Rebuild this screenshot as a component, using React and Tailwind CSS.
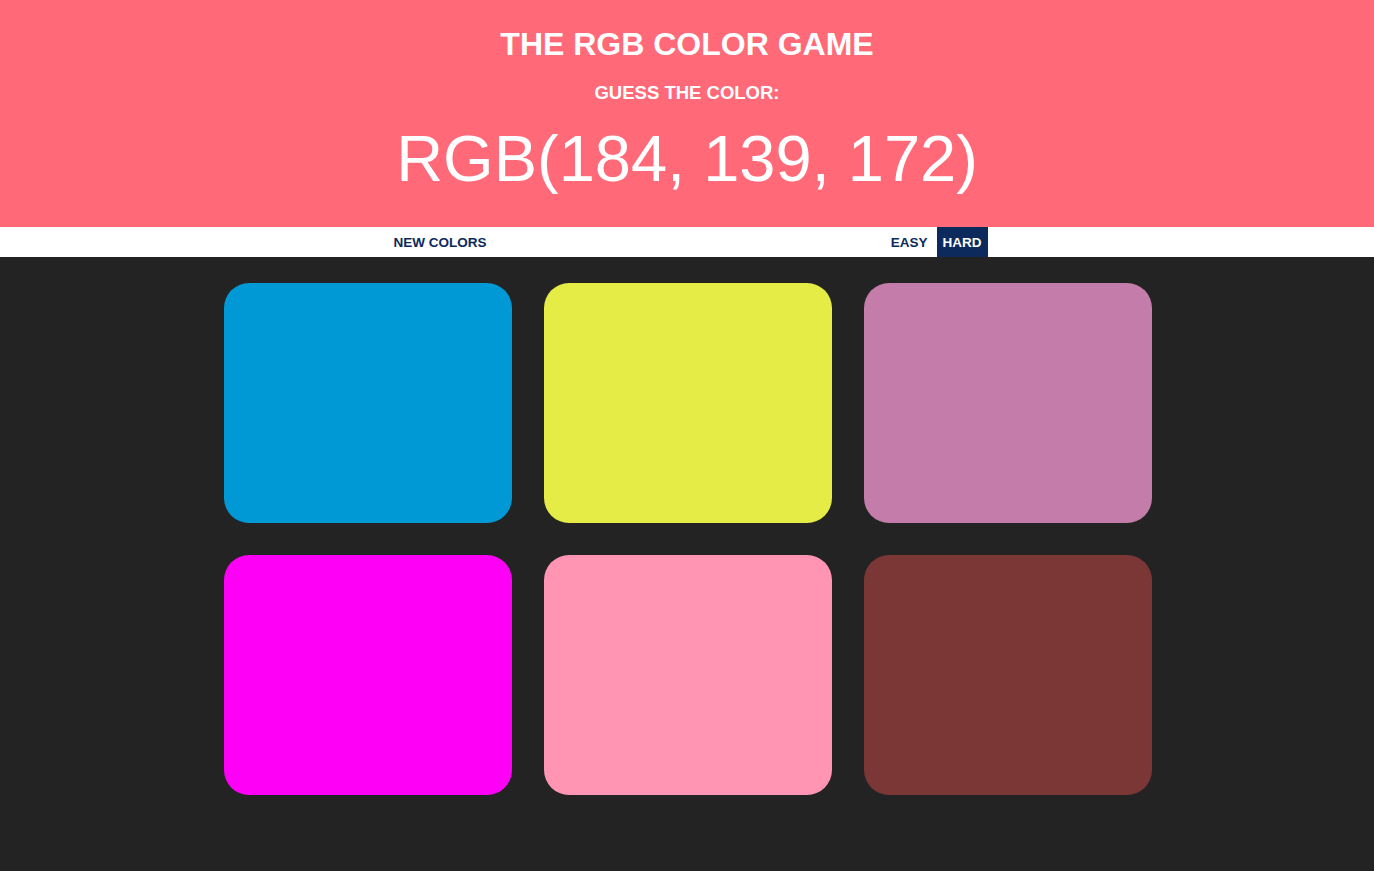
import { useState } from "react";

const colors = [
  "rgb(0, 153, 214)",
  "rgb(229, 236, 69)",
  "rgb(196, 124, 170)",
  "rgb(255, 0, 247)",
  "rgb(255, 148, 179)",
  "rgb(123, 55, 53)",
];

function App() {
  const [mode, setMode] = useState("hard");

  return (
    <div className="min-h-screen bg-[#232323] font-['Liberation_Sans',Arial,sans-serif]">
      {/* Header */}
      <div className="bg-[#ff6978] text-white text-center h-[227px] pt-[26px]">
        <h1 className="text-[32px] font-bold leading-[36px]">THE RGB COLOR GAME</h1>
        <h2 className="text-[18.5px] font-bold mt-[20px] leading-[22px]">GUESS THE COLOR:</h2>
        <div className="text-[65px] leading-[80px] mt-[15px]">RGB(184, 139, 172)</div>
      </div>

      {/* Stripe */}
      <div className="bg-white h-[30px]">
        <div className="w-[601px] mx-auto h-full flex items-center justify-between">
          <button className="h-full px-[7px] pt-[2px] text-[13.5px] font-bold text-[#0c2a5c]">
            NEW COLORS
          </button>
          <div className="flex h-full gap-[3px]">
            <button
              onClick={() => setMode("easy")}
              className={`h-full px-[6px] pt-[2px] text-[13.5px] font-bold ${
                mode === "easy" ? "bg-[#0c2a5c] text-white" : "text-[#0c2a5c]"
              }`}
            >
              EASY
            </button>
            <button
              onClick={() => setMode("hard")}
              className={`h-full px-[6px] pt-[2px] text-[13.5px] font-bold ${
                mode === "hard" ? "bg-[#0c2a5c] text-white" : "text-[#0c2a5c]"
              }`}
            >
              HARD
            </button>
          </div>
        </div>
      </div>

      {/* Squares */}
      <div className="w-[930px] pl-[2px] mx-auto mt-[26px] grid grid-cols-3 gap-[32px]">
        {colors.map((c, i) => (
          <div
            key={i}
            className="h-[240px] rounded-[25px]"
            style={{ backgroundColor: c }}
          />
        ))}
      </div>
    </div>
  );
}

export default App;
